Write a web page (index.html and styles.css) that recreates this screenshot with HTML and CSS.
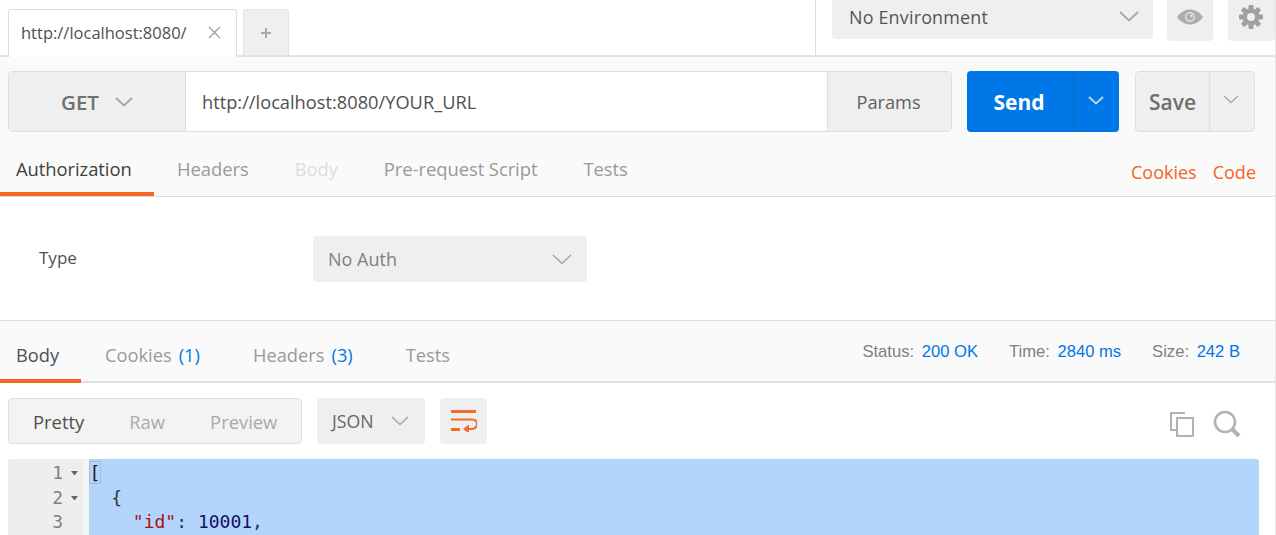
FILE: index.html
```html
<!DOCTYPE html>
<html lang="en">
<head>
<meta charset="utf-8">
<title>Postman</title>
<link rel="stylesheet" href="styles.css">
</head>
<body>
<div class="app">
  <header class="topbar">
    <div class="tabs">
      <div class="tab"><span class="tab-title">http://localhost:8080/</span>
        <svg class="tab-x" width="13" height="13" viewBox="0 0 13 13"><path d="M1 1l11 11M12 1L1 12" stroke="#a0a0a0" stroke-width="1.400" fill="none"/></svg>
      </div>
      <div class="tab-add"><svg width="12" height="12" viewBox="0 0 12 12"><path d="M6 1v10M1 6h10" stroke="#a8a8a8" stroke-width="2" fill="none"/></svg></div>
    </div>
    <div class="env-area">
      <div class="env-select"><span>No Environment</span>
        <svg class="chev" width="20" height="11" viewBox="0 0 20 11"><path d="M1 1l9 8.500 9-8.500" stroke="#a6a6a6" stroke-width="1.800" fill="none"/></svg>
      </div>
      <div class="icon-btn eye-btn">
        <svg width="28" height="18" viewBox="0 0 28 18"><path d="M1 9C5 3.500 9.500 1.500 14 1.500S23 3.500 27 9c-4 5.500-8.500 7.500-13 7.500S5 14.500 1 9z" fill="#adadad"/><circle cx="14" cy="9" r="5" fill="#e4e4e4"/><circle cx="14" cy="9" r="3.600" fill="#adadad"/><circle cx="15.300" cy="7.700" r="1.200" fill="#e4e4e4"/></svg>
      </div>
      <div class="icon-btn gear-btn">
        <svg width="26" height="26" viewBox="0 0 26 26"><g fill="#a0a0a0"><rect x="10.500" y="1" width="5" height="24" rx="1"/><rect x="10.500" y="1" width="5" height="24" rx="1" transform="rotate(45 13 13)"/><rect x="10.500" y="1" width="5" height="24" rx="1" transform="rotate(90 13 13)"/><rect x="10.500" y="1" width="5" height="24" rx="1" transform="rotate(135 13 13)"/><circle cx="13" cy="13" r="8.500"/></g><circle cx="13" cy="13" r="4" fill="#efefef"/></svg>
      </div>
    </div>
  </header>

  <section class="request">
    <div class="url-row">
      <div class="url-box">
        <div class="method"><span>GET</span>
          <svg width="18" height="10" viewBox="0 0 18 10"><path d="M1 1l8 7.500L17 1" stroke="#a6a6a6" stroke-width="1.800" fill="none"/></svg>
        </div>
        <div class="url-input">http://localhost:8080/YOUR_URL</div>
        <div class="params">Params</div>
      </div>
      <div class="send">
        <div class="send-main">Send</div>
        <div class="send-arrow"><svg width="16" height="9" viewBox="0 0 16 9"><path d="M1 1l7 6.500L15 1" stroke="#b9d8f7" stroke-width="2" fill="none"/></svg></div>
      </div>
      <div class="save">
        <div class="save-main">Save</div>
        <div class="save-arrow"><svg width="16" height="9" viewBox="0 0 16 9"><path d="M1 1l7 6.500L15 1" stroke="#aaa" stroke-width="1.500" fill="none"/></svg></div>
      </div>
    </div>
    <nav class="req-tabs">
      <div class="req-tab active">Authorization</div>
      <div class="req-tab">Headers</div>
      <div class="req-tab disabled">Body</div>
      <div class="req-tab">Pre-request Script</div>
      <div class="req-tab">Tests</div>
      <div class="req-links"><span>Cookies</span><span>Code</span></div>
    </nav>
  </section>

  <section class="auth">
    <div class="auth-label">Type</div>
    <div class="auth-select"><span>No Auth</span>
      <svg width="20" height="11" viewBox="0 0 20 11"><path d="M1 1l9 8.500 9-8.500" stroke="#a6a6a6" stroke-width="1.600" fill="none"/></svg>
    </div>
  </section>

  <section class="res-bar">
    <div class="res-tab active">Body</div>
    <div class="res-tab">Cookies <b>(1)</b></div>
    <div class="res-tab">Headers <b>(3)</b></div>
    <div class="res-tab">Tests</div>
    <div class="res-meta">
      <span class="meta-item">Status: <em>200 OK</em></span>
      <span class="meta-item">Time: <em>2840 ms</em></span>
      <span class="meta-item">Size: <em>242 B</em></span>
    </div>
  </section>

  <section class="toolbar">
    <div class="view-group">
      <span class="view current">Pretty</span><span class="view">Raw</span><span class="view">Preview</span>
    </div>
    <div class="lang"><span>JSON</span>
      <svg width="18" height="10" viewBox="0 0 18 10"><path d="M1 1l8 7.500L17 1" stroke="#a6a6a6" stroke-width="1.600" fill="none"/></svg>
    </div>
    <div class="wrap-btn">
      <svg width="26" height="22" viewBox="0 0 26 22"><g stroke="#f26b2a" fill="none"><path d="M0 1.500h25" stroke-width="3"/><path d="M0 9.500h21c4 0 5 2.500 5 4.500s-1.500 5-5 5h-5" stroke-width="2"/><path d="M0 19.500h9" stroke-width="3"/></g><path d="M18 14.500v9l-6-4.500z" fill="#f26b2a"/></svg>
    </div>
    <div class="tools">
      <svg width="25" height="26" viewBox="0 0 25 26"><g fill="none" stroke="#b2b2b2" stroke-width="2"><path d="M16 2H2v17h6"/><rect x="8" y="7" width="16" height="18"/></g></svg>
      <svg width="28" height="28" viewBox="0 0 28 28"><circle cx="12" cy="12" r="10" fill="none" stroke="#b2b2b2" stroke-width="2.600"/><path d="M19 19l7 7" stroke="#b2b2b2" stroke-width="4"/></svg>
    </div>
  </section>

  <section class="editor">
    <div class="gutter">
      <div class="ln">1<i class="fold"></i></div>
      <div class="ln">2<i class="fold"></i></div>
      <div class="ln">3<i class="nofold"></i></div>
    </div>
    <pre class="code"><span class="bracket">[</span>
  {
    <span class="key">"id"</span>: <span class="num">10001</span>,</pre>
  </section>
</div>
</body>
</html>
```
FILE: styles.css
```css
* { box-sizing: border-box; }
html, body { margin: 0; padding: 0; background: #fff; }
body { overflow: hidden; }
.app {
  width: 1276px; height: 535px; overflow: hidden;
  font-family: "Open Sans", sans-serif; font-size: 17px; color: #555;
  border-right: 1px solid #e6e6e6;
}
svg { display: block; flex: none; }

.topbar { height: 57px; display: flex; justify-content: space-between; border-bottom: 2px solid #e4e4e4; }
.tabs { display: flex; padding: 9px 0 0 8px; gap: 6px; }
.tab {
  width: 229px; height: 48px; border: 1px solid #dedede; border-bottom: 0;
  border-radius: 3px 3px 0 0; display: flex; align-items: center; padding: 0 0 2px 12px; margin-bottom: -2px;
  position: relative; background: #fff; font-size: 16.500px; color: #505050;
}
.tab-title { width: 187px; white-space: nowrap; }
.tab-x { margin-left: 0; }
.tab-add {
  width: 46px; height: 46px; background: #efefef; border: 1px solid #e3e3e3; border-bottom: 0;
  border-radius: 3px 3px 0 0; display: flex; align-items: center; justify-content: center;
}
.env-area {
  width: 460px; height: 55px; border-left: 1px solid #dcdcdc;
  display: flex; align-items: flex-start; padding-left: 15px;
}
.env-select {
  width: 321px; height: 39px; background: #efefef; border-radius: 0 0 4px 4px; margin-left: 1px;
  display: flex; align-items: center; justify-content: space-between; padding: 0 14px 6px 17px;
  font-size: 17.900px; color: #555; letter-spacing: .2px;
}
.icon-btn { height: 41px; background: #efefef; border-radius: 0 0 4px 4px; display: flex; justify-content: center; align-items: center; padding-bottom: 7px; }
.eye-btn { width: 46px; margin-left: 14px; }
.gear-btn { width: 47px; margin-left: 15px; padding-right: 2px; }

.request { height: 140px; background: #fafafa; padding-top: 14px; border-bottom: 1px solid #dcdcdc; display: flex; flex-direction: column; }
.url-row { display: flex; height: 61px; padding-left: 8px; flex: none; }
.url-box { width: 944px; display: flex; border: 1px solid #dedede; border-radius: 4px; overflow: hidden; background: #fff; }
.method {
  width: 177px; background: #efefef; border-right: 1px solid #dedede; display: flex; align-items: center; justify-content: center; gap: 16px;
  font-size: 20.500px; font-weight: 600; color: #707070; padding-top: 1px;
}
.url-input { flex: 1; display: flex; align-items: center; padding-left: 16px; font-size: 18.250px; color: #505050; }
.params { width: 124px; background: #efefef; border-left: 1px solid #dedede; display: flex; align-items: center; justify-content: center; font-size: 18.200px; color: #606060; padding-right: 2px; }
.send { width: 152px; margin-left: 15px; display: flex; border-radius: 4px; overflow: hidden; background: #0077e6; color: #fff; }
.send-main { width: 107px; display: flex; align-items: center; justify-content: center; padding-right: 2px; font-size: 21px; font-weight: 700; border-right: 1px solid #0a68bf; }
.send-arrow { flex: 1; display: flex; align-items: center; justify-content: center; padding: 0 2px 3px 0; }
.save { width: 120px; margin-left: 16px; display: flex; border: 1px solid #dedede; border-radius: 4px; overflow: hidden; background: #efefef; }
.save-main { width: 74px; display: flex; align-items: center; justify-content: center; font-size: 21px; font-weight: 600; color: #6e6e6e; border-right: 1px solid #dedede; }
.save-arrow { flex: 1; display: flex; align-items: center; justify-content: center; padding: 0 2px 4px 0; }

.req-tabs { flex: 1; display: flex; align-items: stretch; margin-top: 18px; font-size: 18.400px; }
.req-tab { padding: 3px 0 8px; display: flex; align-items: center; margin-left: 46px; color: #999; border-bottom: 4px solid transparent; letter-spacing: -.05px; }
.req-tab.active { margin-left: 0; width: 154px; padding: 3px 0 8px 16px; color: #404040; border-bottom-color: #f26522; margin-right: -23px; }
.req-tab.disabled { color: #ddd; }
.req-links { margin-left: auto; display: flex; gap: 16px; padding: 0 19px 2px 0; align-items: center; color: #f26522; font-size: 18px; }

.auth { height: 124px; border-bottom: 1px solid #dcdcdc; display: flex; align-items: flex-start; padding: 39px 0 0 39px; }
.auth-label { width: 274px; height: 46px; display: flex; align-items: center; padding-bottom: 3px; font-size: 17px; color: #505050; }
.auth-select {
  width: 274px; height: 46px; background: #efefef; border-radius: 4px; display: flex; align-items: center; justify-content: space-between;
  padding: 0 15px 0 15px; font-size: 18px; color: #808080;
}

.res-bar { height: 62px; background: #fafafa; border-bottom: 2px solid #e0e0e0; display: flex; font-size: 18.300px; color: #999; }
.res-tab { display: flex; gap: 7px; align-items: center; padding: 8px 0 0; margin-left: 53px; margin-bottom: -2px; border-bottom: 4px solid transparent; }
.res-tab b { font-weight: 400; color: #0077e6; }
.res-tab.active { margin-left: 0; padding: 8px 0 0 16px; width: 81px; margin-right: -29px; color: #505050; border-bottom-color: #f26522; }
.res-meta { margin-left: auto; display: flex; gap: 31px; padding: 21px 35px 0 0; font-family: "Liberation Sans", sans-serif; font-size: 16.600px; color: #808080; }
.meta-item em { font-style: normal; color: #0077e6; margin-left: 3px; }

.toolbar { height: 76px; display: flex; align-items: flex-start; padding: 15px 0 0 8px; }
.view-group {
  width: 294px; height: 46px; background: #f3f3f3; border: 1px solid #dedede; border-radius: 4px;
  display: flex; align-items: center; padding: 0 0 0 24px; font-size: 18.400px; color: #aaa;
}
.view { margin-right: 45px; }
.view.current { color: #505050; }
.lang {
  width: 108px; height: 46px; margin-left: 15px; background: #efefef; border-radius: 4px; display: flex; align-items: center;
  justify-content: space-between; padding: 0 16px 0 15px; font-size: 17.700px; color: #666;
}
.wrap-btn { width: 47px; height: 46px; margin-left: 15px; background: #efefef; border-radius: 4px; display: flex; align-items: center; justify-content: center; }
.tools { margin-left: auto; display: flex; gap: 19px; padding: 12px 34px 0 0; align-items: center; }

.editor { display: flex; margin: 0 16px 0 8px; height: 76px; border-radius: 3px 3px 0 0; overflow: hidden; background: #f5f5f5; font-family: "DejaVu Sans Mono", monospace; font-size: 18px; line-height: 24.500px; }
.gutter { width: 75px; background: #eeeeee; color: #808080; flex: none; padding-top: 2px; }
.ln { display: flex; justify-content: flex-end; align-items: center; height: 24.500px; padding-right: 5px; }
.fold, .nofold { display: block; width: 7px; margin-left: 8px; }
.fold { height: 0; border-left: 3.500px solid transparent; border-right: 3.500px solid transparent; border-top: 4px solid #666; }
.code { margin: 0 0 0 6px; flex: 1; background: #b3d4fb; color: #333; font: inherit; padding: 2px 0 0 .5px; }
.bracket { outline: 1px solid #a9bcd6; color: #222; }
.key { color: #a11; }
.num { color: #116; }
```
